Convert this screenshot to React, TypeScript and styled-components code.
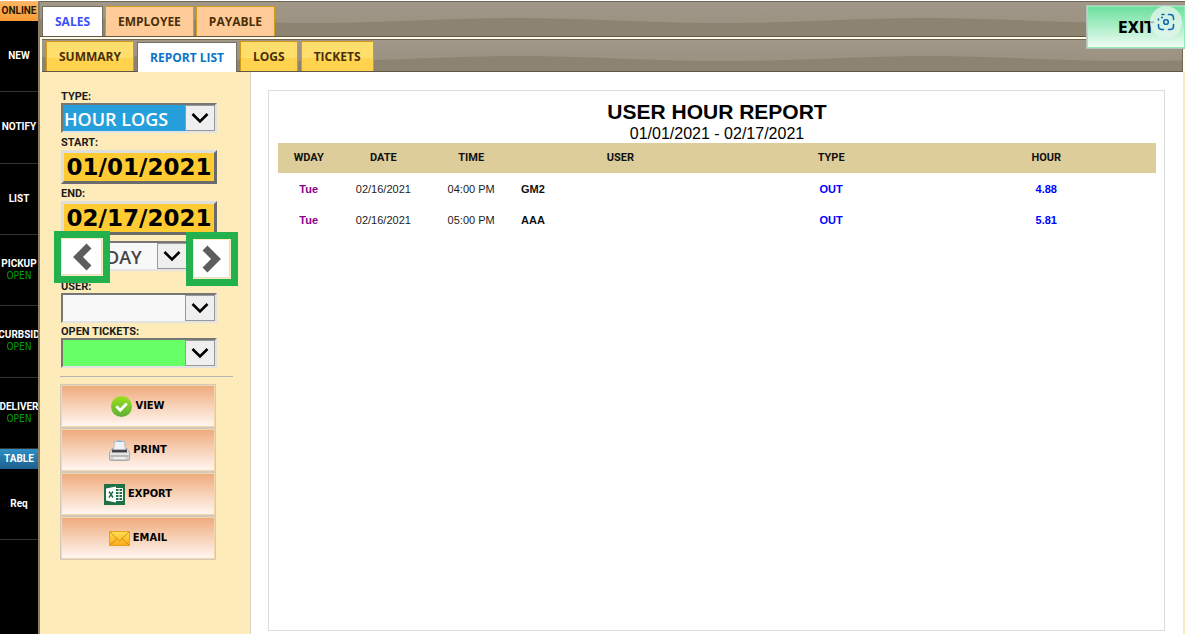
import React from "react";
import styled, { createGlobalStyle, css } from "styled-components";

const compact = `Roboto, "Liberation Sans", sans-serif`;
const arial = `"Liberation Sans", Arial, sans-serif`;
const segoe = `"Open Sans", "Noto Sans", sans-serif`;
const tahoma = `"DejaVu Sans Condensed", "DejaVu Sans", sans-serif`;

const GlobalStyle = createGlobalStyle`
  *, *::before, *::after { box-sizing: border-box; }
  body { margin: 0; padding: 1px 0 2px; background: #fff; font-family: ${arial}; overflow-x: hidden; }
  button, select { font: inherit; margin: 0; border-radius: 0; cursor: pointer; }
`;

const Page = styled.div`
  position: relative;
  display: flex;
  min-height: calc(100vh - 3px);
`;

const Rail = styled.nav`
  flex: 0 0 38px;
  width: 38px;
  overflow: hidden;
  background: #000;
  font: bold 10px/12px ${compact};
`;

const Banner = styled.div<{ $tone: "orange" | "blue" }>`
  display: flex;
  align-items: center;
  justify-content: center;
  height: 20px;
  ${(p) =>
    p.$tone === "orange"
      ? css`background: linear-gradient(#ffb767, #f99b33); color: #2a1800;`
      : css`background: linear-gradient(#2f8fc4, #1c5f8c); color: #fff;`}
`;

const RailGroup = styled.div`
  display: flex;
  flex-direction: column;
  height: 428px;
`;

const RailItem = styled.button`
  flex: 1;
  display: flex;
  flex-direction: column;
  align-items: center;
  justify-content: center;
  width: 100%;
  min-height: 71px;
  padding: 0;
  border: 0;
  border-bottom: 1px solid #333;
  background: #000;
  color: #fff;
  small { color: #00a000; font: 10px/12px ${tahoma}; }
`;

const Main = styled.main`
  flex: 1;
  min-width: 0;
  display: flex;
  flex-direction: column;
  border-left: 2px solid #8b7d5f;
  background: #fdecba;
`;

const TabBar = styled.div<{ $level: 1 | 2 }>`
  position: relative;
  display: flex;
  align-items: flex-end;
  gap: ${(p) => (p.$level === 1 ? 2 : 3)}px;
  height: ${(p) => (p.$level === 1 ? 36 : 33)}px;
  padding-left: ${(p) => (p.$level === 1 ? 2 : 4)}px;
  border-top: 1px solid #6f6653;
  border-bottom: 1px solid #5f5644;
  background: linear-gradient(#a09788, #999080);
  ${(p) => p.$level === 2 && css`border-right: 1px solid #6f6653;`}
`;

const SubFrame = styled.div`
  padding: 2px 2px 0;
  background: #fffbe6;
`;

const WaveSvg = styled.svg`
  position: absolute;
  inset: 0;
  width: 100%;
  height: 100%;
`;

const tabTones = {
  white: css`background: #fff; border-color: #77705f; color: #3b4fff;`,
  sky: css`background: #fff; border-color: #77705f; color: #0a74c9; margin-bottom: -1px;`,
  peach: css`background: #ffcc99; border-color: #d49a1a; color: #4a2f08;`,
  gold: css`background: linear-gradient(#ffde6b 55%, #ffd34d 55%); border-color: #d49a1a; color: #4a2f08;`,
};

const Tab = styled.button<{ $tone: keyof typeof tabTones }>`
  position: relative;
  height: 30px;
  padding: 0 12px;
  border: 1px solid;
  border-bottom: 0;
  font: bold 12px/28px ${segoe};
  white-space: nowrap;
  ${(p) => tabTones[p.$tone]}
`;

const Exit = styled.button`
  position: absolute;
  top: 4px;
  right: 0;
  width: 99px;
  height: 44px;
  padding: 2px 0 0;
  border: 1px solid #b5c4b8;
  border-right: 0;
  background: linear-gradient(#69df9c, #f2fdf6);
  box-shadow: inset 0 0 0 1px #90eeb4;
  font: bold 16px/20px ${tahoma};
  color: #000;
`;

const Lens = styled.span`
  position: absolute;
  top: 0;
  right: 3px;
  display: grid;
  place-items: center;
  width: 32px;
  height: 32px;
  border-radius: 50%;
  background: rgba(225, 245, 235, 0.8);
`;

const Body = styled.div`
  flex: 1;
  display: flex;
  margin-right: 2px;
  background: #fff;
`;

const Sidebar = styled.aside`
  flex: 0 0 211px;
  padding: 16px 17px 0 20px;
  border-right: 1px solid #ddd6c8;
  background: #fdecba;
`;

const Field = styled.div<{ $offset?: number }>`
  width: 156px;
  margin: ${(p) => p.$offset ?? 0}px 0 0 1px;
`;

const Label = styled.label<{ $tall?: boolean }>`
  display: block;
  padding-top: 3px;
  font: bold 11px/${(p) => (p.$tall ? 14 : 12)}px ${compact};
  color: #1c1c1c;
`;

const SelectFrame = styled.div<{ $bg?: string }>`
  display: flex;
  position: relative;
  height: 30px;
  border: 2px solid;
  border-color: #767676 #e3e3e3 #e3e3e3 #767676;
  background: ${(p) => p.$bg ?? "#f8f8f8"};
`;

const NativeSelect = styled.select<{ $highlight?: boolean; $indent?: number }>`
  appearance: none;
  flex: 1;
  min-width: 0;
  margin-right: 30px;
  padding: 2px 0 0 ${(p) => p.$indent ?? 1}px;
  border: 0;
  outline: 0;
  background: ${(p) => (p.$highlight ? "#26a0da" : "transparent")};
  color: ${(p) => (p.$highlight ? "#fff" : "#444")};
  font: 600 18px/24px ${segoe};
`;

const Arrow = styled.span`
  position: absolute;
  inset: 0 0 0 auto;
  display: grid;
  place-items: center;
  width: 30px;
  border: 1px solid #999;
  background: #efefef;
  pointer-events: none;
`;

const DateButton = styled.button`
  display: block;
  width: 100%;
  height: 34px;
  padding: 0;
  border: 3px solid;
  border-color: #dedede #6b6b6b #6b6b6b #dedede;
  background: #ffcb33;
  color: #000;
  font: bold 23px/28px "DejaVu Sans", Verdana, sans-serif;
  white-space: nowrap;
`;

const Stepper = styled.div`
  position: relative;
  height: 31px;
  margin: 6px 0 0 1px;
  padding: 0 44px 0 39px;
`;

const StepButton = styled.button<{ $side: "left" | "right" }>`
  position: absolute;
  ${(p) =>
    p.$side === "left"
      ? "top: -10px; left: -7px; width: 56px; height: 52px;"
      : "top: -9px; left: 125px; width: 52px; height: 54px;"}
  padding: 0;
  display: grid;
  place-items: center;
  border: 7px solid #22b14c;
  background: #fff;
  box-shadow: inset 0 0 0 1px #fdecba, inset -2px -2px 0 #e3dcd0;
`;

const Rule = styled.hr`
  height: 1px;
  margin: 8px 0 7px;
  border: 0;
  background: #b5b5b5;
`;

const Action = styled.button`
  display: flex;
  align-items: center;
  justify-content: center;
  gap: 3px;
  width: 156px;
  height: 44px;
  padding: 0;
  border: 1px solid #d2cbbd;
  background: linear-gradient(#efaa7b, #fff8f3);
  box-shadow: inset 0 0 0 1px #f3d6ac;
  color: #000;
  font: bold 11px/14px ${tahoma};
`;

const Content = styled.section`
  flex: 1;
  min-width: 0;
  display: flex;
  padding: 18px 18px 3px 17px;
`;

const Report = styled.article`
  flex: 1;
  padding: 9px 8px 9px 9px;
  border: 1px solid #dcdcdc;
  text-align: center;
`;

const Title = styled.h1`
  margin: 0;
  font: bold 21px/24px ${arial};
  color: #000;
`;

const Range = styled.p`
  margin: 0;
  font: 16px/19px ${arial};
`;

const Grid = styled.table`
  width: 100%;
  table-layout: fixed;
  border-collapse: collapse;
  font: 11px/14px ${arial};
  color: #1c1c1c;
  thead { background: #ddcd9b; }
  th { height: 30px; padding: 0; font: bold 11px/14px ${compact}; color: #111; }
  td { height: 31px; padding: 0; }
`;

const Cell = styled.td<{ $color?: string; $left?: boolean }>`
  font: bold 11px/14px ${arial};
  color: ${(p) => p.$color ?? "#111"};
  ${(p) => p.$left && css`&& { text-align: left; padding-left: 6px; }`}
`;

const Wave = ({ id }: { id: string }) => (
  <WaveSvg aria-hidden="true">
    <defs>
      <pattern id={id} x="66" width="410" height="36" patternUnits="userSpaceOnUse">
        <path d="M0 16C70 16 130 21 205 21S340 16 410 16V36H0z" fill="#8c8371" />
      </pattern>
    </defs>
    <rect width="100%" height="100%" fill={`url(#${id})`} />
  </WaveSvg>
);

const Chevron = () => (
  <svg width="18" height="12" viewBox="0 0 18 12" aria-hidden="true">
    <path d="M1.500 2 9 9.500 16.500 2" fill="none" stroke="#000" strokeWidth="2.600" />
  </svg>
);

const StepIcon = ({ flip }: { flip?: boolean }) => (
  <svg width="20" height="28" viewBox="0 0 20 28" aria-hidden="true">
    <path d={flip ? "M3 3 14 14 3 25" : "M17 3 6 14 17 25"} fill="none" stroke="#5d5d5d" strokeWidth="7" />
  </svg>
);

const CheckIcon = () => (
  <svg width="21" height="21" viewBox="0 0 21 21" aria-hidden="true">
    <defs>
      <linearGradient id="ok" x2="0" y2="1"><stop stopColor="#9be01c" /><stop offset="1" stopColor="#5fae35" /></linearGradient>
    </defs>
    <circle cx="10.5" cy="10.5" r="10.5" fill="url(#ok)" />
    <path d="m5.3 10.3 3.9 3.9 6.6-6.8" fill="none" stroke="#fff" strokeWidth="2.8" />
  </svg>
);

const PrinterIcon = () => (
  <svg width="21" height="21" viewBox="0 0 21 21" aria-hidden="true">
    <defs>
      <linearGradient id="tray" x2="0" y2="1"><stop stopColor="#fff" /><stop offset="1" stopColor="#c6c6c6" /></linearGradient>
    </defs>
    <path d="M3 8.5h15l2.5 4.5V19q0 1.5-1.5 1.5H2Q.5 20.5.5 19v-6z" fill="url(#tray)" stroke="#aaa" />
    <path d="M3.5 9h14l.8 3.500H2.700z" fill="#444" />
    <path d="M5.500 1.500h10l1 8h-12z" fill="#eef2f7" stroke="#b5bac2" />
    <path d="M8.500.5h4v1.500h-4z" fill="#6eb5df" />
    <path d="M1.500 16h18" stroke="#999" />
    <path d="M4.500 18h12" stroke="#eee" strokeWidth="2" />
  </svg>
);

const SheetIcon = () => (
  <svg width="21" height="21" viewBox="0 0 21 21" aria-hidden="true">
    <path d="M0 0h21v21H0z" fill="#1f7145" />
    <path d="M11.500 4.500h7v12h-7z" fill="none" stroke="#fff" />
    <path d="M12 7.500h6M12 10.500h6M12 13.500h6M15 5v11" stroke="#fff" />
    <path d="M2 4.500 12 2.500v16L2 16.500z" fill="#fff" />
    <path d="m5 7.500 4 6M9 7.500l-4 6" stroke="#1f7145" strokeWidth="1.500" />
  </svg>
);

const MailIcon = () => (
  <svg width="21" height="15" viewBox="0 0 21 15" aria-hidden="true">
    <defs>
      <linearGradient id="mail" x2="0" y2="1"><stop stopColor="#ffe053" /><stop offset="1" stopColor="#fdab16" /></linearGradient>
    </defs>
    <path d="M.5.5h20v14H.5z" fill="url(#mail)" stroke="#e9a01d" />
    <path d="m1 14 7-6.500M20 14l-7-6.500M1 1l9.500 9L20 1" fill="none" stroke="#d98b12" />
  </svg>
);

const LensIcon = () => (
  <svg width="18" height="18" viewBox="0 0 18 18" fill="none" stroke="#1267b4" strokeWidth="1.600" aria-hidden="true">
    <path d="M7 1.500H5M1.500 7V6M11.500 1.500H13Q16.500 1.500 16.500 5v1.500M16.500 11.500V13q0 3.500-3.500 3.500h-1.500M6.500 16.500H5Q1.500 16.500 1.500 13v-1.500" strokeLinecap="round" />
    <circle cx="9" cy="9" r="2.300" />
    <circle cx="5" cy="4.500" r="1" fill="#1267b4" stroke="none" />
  </svg>
);

type PickProps = { id: string; value?: string; highlight?: boolean; bg?: string; indent?: number; label?: string };
const Pick = ({ id, value = "", highlight, bg, indent, label }: PickProps) => (
  <SelectFrame $bg={bg}>
    <NativeSelect id={id} aria-label={label} $highlight={highlight} $indent={indent}>
      <option>{value}</option>
    </NativeSelect>
    <Arrow><Chevron /></Arrow>
  </SelectFrame>
);

const railItems = [
  { name: "NEW" },
  { name: "NOTIFY" },
  { name: "LIST" },
  { name: "PICKUP", status: "OPEN" },
  { name: "CURBSID", status: "OPEN" },
  { name: "DELIVER", status: "OPEN" },
];

const columns = [
  ["WDAY", "7%"],
  ["DATE", "10%"],
  ["TIME", "10%"],
  ["USER", "24%"],
  ["TYPE", "24%"],
  ["HOUR", "25%"],
];

const rows = [
  { day: "Tue", date: "02/16/2021", time: "04:00 PM", user: "GM2", type: "OUT", hour: "4.88" },
  { day: "Tue", date: "02/16/2021", time: "05:00 PM", user: "AAA", type: "OUT", hour: "5.81" },
];

export default function App() {
  return (
    <>
      <GlobalStyle />
      <Page>
        <Rail>
          <Banner $tone="orange">ONLINE</Banner>
          <RailGroup>
            {railItems.map((item) => (
              <RailItem key={item.name}>
                {item.name}
                {item.status && <small>{item.status}</small>}
              </RailItem>
            ))}
          </RailGroup>
          <Banner $tone="blue">TABLE</Banner>
          <RailItem>Req</RailItem>
        </Rail>
        <Main>
          <TabBar $level={1}>
            <Wave id="wave-main" />
            <Tab $tone="white">SALES</Tab>
            <Tab $tone="peach">EMPLOYEE</Tab>
            <Tab $tone="peach">PAYABLE</Tab>
          </TabBar>
          <SubFrame>
            <TabBar $level={2}>
              <Wave id="wave-sub" />
              <Tab $tone="gold">SUMMARY</Tab>
              <Tab $tone="sky">REPORT LIST</Tab>
              <Tab $tone="gold">LOGS</Tab>
              <Tab $tone="gold">TICKETS</Tab>
            </TabBar>
          </SubFrame>
          <Body>
            <Sidebar>
              <Field>
                <Label htmlFor="type">TYPE:</Label>
                <Pick id="type" value="HOUR LOGS" highlight />
              </Field>
              <Field>
                <Label htmlFor="start" $tall>START:</Label>
                <DateButton id="start">01/01/2021</DateButton>
              </Field>
              <Field>
                <Label htmlFor="end" $tall>END:</Label>
                <DateButton id="end">02/17/2021</DateButton>
              </Field>
              <Stepper>
                <Pick id="period" value="DAY" label="Period" indent={4} />
                <StepButton $side="left" aria-label="Previous"><StepIcon /></StepButton>
                <StepButton $side="right" aria-label="Next"><StepIcon flip /></StepButton>
              </Stepper>
              <Field $offset={6}>
                <Label htmlFor="user">USER:</Label>
                <Pick id="user" />
              </Field>
              <Field>
                <Label htmlFor="tickets">OPEN TICKETS:</Label>
                <Pick id="tickets" bg="#66ff66" />
              </Field>
              <Rule />
              <Action><CheckIcon />VIEW</Action>
              <Action><PrinterIcon />PRINT</Action>
              <Action><SheetIcon />EXPORT</Action>
              <Action><MailIcon />EMAIL</Action>
            </Sidebar>
            <Content>
              <Report>
                <Title>USER HOUR REPORT</Title>
                <Range>01/01/2021 - 02/17/2021</Range>
                <Grid>
                  <colgroup>
                    {columns.map(([name, width]) => <col key={name} width={width} />)}
                  </colgroup>
                  <thead>
                    <tr>{columns.map(([name]) => <th key={name}>{name}</th>)}</tr>
                  </thead>
                  <tbody>
                    {rows.map((row) => (
                      <tr key={row.user}>
                        <Cell $color="#8b008b">{row.day}</Cell>
                        <td>{row.date}</td>
                        <td>{row.time}</td>
                        <Cell $left>{row.user}</Cell>
                        <Cell $color="#0000ff">{row.type}</Cell>
                        <Cell $color="#0000ff">{row.hour}</Cell>
                      </tr>
                    ))}
                  </tbody>
                </Grid>
              </Report>
            </Content>
          </Body>
        </Main>
        <Exit>
          EXIT
          <Lens><LensIcon /></Lens>
        </Exit>
      </Page>
    </>
  );
}
